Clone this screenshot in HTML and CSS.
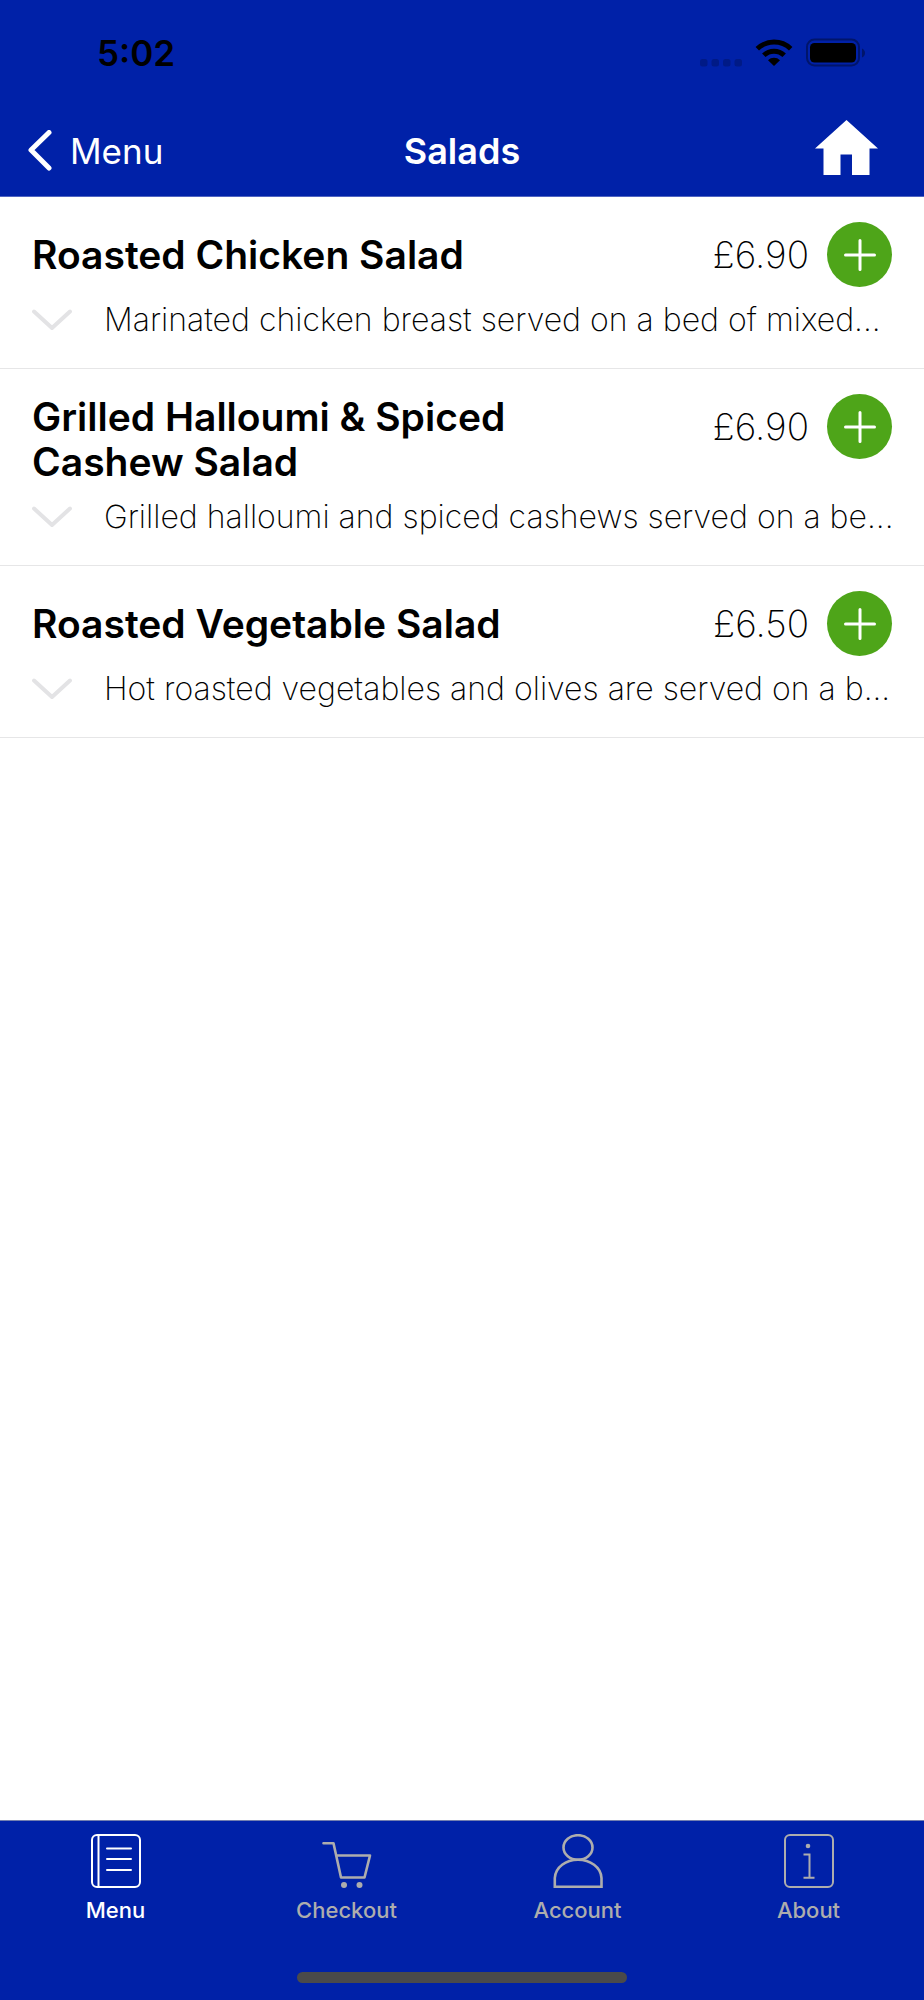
FILE: index.html
```html
<!DOCTYPE html>
<html lang="en">
<head>
<meta charset="utf-8">
<meta name="viewport" content="width=device-width, initial-scale=1">
<title>Salads</title>
<link rel="stylesheet" href="styles.css">
</head>
<body>
<div class="app">
  <header class="top">
    <div class="status">
      <span class="clock">5:02</span>
      <svg class="status-icons" width="166" height="30" viewBox="0 0 166 30" aria-hidden="true">
        <g fill="#001a86">
          <rect x="0" y="21" width="7.5" height="7.5" rx="2.5"/>
          <rect x="11.5" y="21" width="7.5" height="7.5" rx="2.5"/>
          <rect x="23" y="21" width="7.5" height="7.5" rx="2.5"/>
          <rect x="34.5" y="21" width="7.5" height="7.5" rx="2.5"/>
        </g>
        <g fill="none" stroke="#000" stroke-width="5">
          <path d="M57.3 10.8a24.2 24.2 0 0 1 33.4 0"/>
          <path d="M63.8 17.3a14.8 14.8 0 0 1 20.4 0"/>
        </g>
        <path d="M74 28l-6-5.8a8.6 8.6 0 0 1 12 0z"/>
        <rect x="107" y="1.5" width="52" height="26" rx="7.5" fill="none" stroke="#00156b" stroke-width="2"/>
        <rect x="110" y="5" width="46" height="19.500" rx="4.500"/>
        <path d="M162 10.500q3 1.500 3 4.500t-3 4.500z" fill="#00156b"/>
      </svg>
    </div>
    <nav class="navbar">
      <a class="back" href="#menu">
        <svg width="24" height="42" viewBox="0 0 24 42" aria-hidden="true"><path d="M21 2.500L3 20l18 18" fill="none" stroke="#fff" stroke-width="5" stroke-linecap="round" stroke-linejoin="round"/></svg>
        Menu
      </a>
      <h1 class="title">Salads</h1>
      <a class="home" href="#home" aria-label="Home">
        <svg width="63" height="55" viewBox="0 0 63 55" aria-hidden="true"><path d="M31.500 0L63 28.500h-8.500V55H37V34.500H25.500V55H8.500V28.500H0z" fill="#fff"/></svg>
      </a>
    </nav>
  </header>

  <main class="list">
    <article class="item">
      <div class="item-head">
        <h2 class="name">Roasted Chicken Salad</h2>
        <span class="price">£6.90</span>
        <button class="add" type="button" aria-label="Add Roasted Chicken Salad"><svg width="32" height="32" viewBox="0 0 32 32" aria-hidden="true"><path d="M16 1.500v29M1.500 16h29"/></svg></button>
      </div>
      <button class="more" type="button">
        <svg class="chevron" width="40" height="22" viewBox="0 0 40 22" aria-hidden="true"><path d="M2 2.500l18 16.500L38 2.500"/></svg>
        <span class="desc">Marinated chicken breast served on a bed of mixed...</span>
      </button>
    </article>
    <article class="item">
      <div class="item-head">
        <h2 class="name">Grilled Halloumi &amp; Spiced Cashew Salad</h2>
        <span class="price">£6.90</span>
        <button class="add" type="button" aria-label="Add Grilled Halloumi and Spiced Cashew Salad"><svg width="32" height="32" viewBox="0 0 32 32" aria-hidden="true"><path d="M16 1.500v29M1.500 16h29"/></svg></button>
      </div>
      <button class="more" type="button">
        <svg class="chevron" width="40" height="22" viewBox="0 0 40 22" aria-hidden="true"><path d="M2 2.500l18 16.500L38 2.500"/></svg>
        <span class="desc">Grilled halloumi and spiced cashews served on a be...</span>
      </button>
    </article>
    <article class="item">
      <div class="item-head">
        <h2 class="name">Roasted Vegetable Salad</h2>
        <span class="price">£6.50</span>
        <button class="add" type="button" aria-label="Add Roasted Vegetable Salad"><svg width="32" height="32" viewBox="0 0 32 32" aria-hidden="true"><path d="M16 1.500v29M1.500 16h29"/></svg></button>
      </div>
      <button class="more" type="button">
        <svg class="chevron" width="40" height="22" viewBox="0 0 40 22" aria-hidden="true"><path d="M2 2.500l18 16.500L38 2.500"/></svg>
        <span class="desc">Hot roasted vegetables and olives are served on a b...</span>
      </button>
    </article>
  </main>

  <footer class="bottom">
    <nav class="tabs">
      <a class="tab tab-active" href="#menu" aria-current="page">
        <svg width="50" height="54" viewBox="0 0 50 54" aria-hidden="true"><g fill="none" stroke="currentColor" stroke-width="2"><rect x="1" y="1" width="48" height="52" rx="5"/><path d="M7.500 1v52"/><path d="M16 14.500h24M16 25h24M16 36h24" stroke-linecap="round"/></g></svg>
        Menu
      </a>
      <a class="tab" href="#checkout">
        <svg width="50" height="54" viewBox="0 0 50 54" aria-hidden="true"><g fill="none" stroke="currentColor" stroke-width="2.600" stroke-linejoin="round" stroke-linecap="round"><path d="M1.500 9.300h10L19 43.500h23.500L48 21.500H14.500"/></g><g fill="currentColor"><circle cx="22" cy="51" r="3"/><circle cx="37.500" cy="51" r="3"/></g></svg>
        Checkout
      </a>
      <a class="tab" href="#account">
        <svg width="50" height="54" viewBox="0 0 50 54" aria-hidden="true"><g fill="none" stroke="currentColor" stroke-width="2.600"><ellipse cx="25" cy="13.500" rx="14.500" ry="12.300"/><path d="M1.800 52.700V44C2.500 33 13 25.800 25 25.800S48 33 48.500 44v8.700z"/></g></svg>
        Account
      </a>
      <a class="tab" href="#about">
        <svg width="50" height="54" viewBox="0 0 50 54" aria-hidden="true"><g fill="none" stroke="currentColor" stroke-width="2"><rect x="1" y="1" width="48" height="52" rx="5"/><path d="M19.500 20.500h6v23M19.500 43.800h11"/></g><circle cx="24" cy="12" r="2.300" fill="currentColor"/></svg>
        About
      </a>
    </nav>
    <div class="home-indicator"></div>
  </footer>
</div>
</body>
</html>
```

FILE: styles.css
```css
* {
  box-sizing: border-box;
}

body {
  margin: 0;
  background: #fff;
  color: #000;
  font-family: Inter, "Liberation Sans", sans-serif;
}

h1,
h2 {
  margin: 0;
  font-weight: 600;
}

a {
  color: inherit;
  text-decoration: none;
}

button {
  border: 0;
  padding: 0;
  background: none;
  color: inherit;
  font: inherit;
  text-align: left;
}

svg {
  display: block;
  flex: none;
}

.app {
  display: flex;
  flex-direction: column;
  min-height: 100vh;
}

.top {
  background: #0021a8;
  border-bottom: 1px solid #4f64c1;
}

.status {
  display: flex;
  align-items: center;
  justify-content: space-between;
  height: 105px;
  padding: 0 58px 0 97px;
}

.clock {
  font-size: 35px;
  font-weight: 600;
}

.navbar {
  display: grid;
  grid-template-columns: 1fr auto 1fr;
  align-items: center;
  height: 91px;
  padding: 0 46px 0 28px;
  color: #fff;
}

.back {
  display: flex;
  align-items: center;
  gap: 18px;
  font-size: 35px;
  line-height: 44px;
}

.title {
  padding-left: 18px;
  font-size: 36px;
  line-height: 44px;
}

.home {
  justify-self: end;
  padding-bottom: 6px;
}

.list {
  flex: 1;
}

.item {
  padding: 25px 32px 29px;
  border-bottom: 1px solid #e6e6e7;
}

.item-head {
  display: flex;
  align-items: flex-start;
}

.name {
  display: flex;
  align-items: center;
  flex: 1;
  min-height: 65px;
  padding-right: 150px;
  font-size: 39px;
  line-height: 45px;
}

.price {
  font-size: 37px;
  font-weight: 200;
  line-height: 65px;
}

.add {
  display: flex;
  align-items: center;
  justify-content: center;
  width: 65px;
  height: 65px;
  margin-left: 18px;
  border-radius: 50%;
  background: #4ea519;
}

.add path {
  stroke: #fff;
  stroke-width: 3;
  stroke-linecap: round;
}

.more {
  display: flex;
  align-items: center;
  gap: 32px;
  width: 100%;
  margin-top: 14px;
}

.chevron path {
  fill: none;
  stroke: #e3e3e5;
  stroke-width: 4;
  stroke-linecap: round;
  stroke-linejoin: round;
}

.desc {
  font-size: 32px;
  font-weight: 200;
  line-height: 38px;
  white-space: nowrap;
}

.bottom {
  background: #0021a8;
  border-top: 1px solid #7480b0;
}

.tabs {
  display: grid;
  grid-template-columns: repeat(4, 1fr);
  padding-top: 13px;
}

.tab {
  display: flex;
  flex-direction: column;
  align-items: center;
  gap: 9px;
  color: #adadad;
  font-size: 22px;
  font-weight: 500;
  line-height: 26px;
}

.tab-active {
  color: #fff;
}

.home-indicator {
  width: 330px;
  height: 11px;
  margin: 49px auto 17px;
  border-radius: 6px;
  background: #4a4a4a;
}
```
